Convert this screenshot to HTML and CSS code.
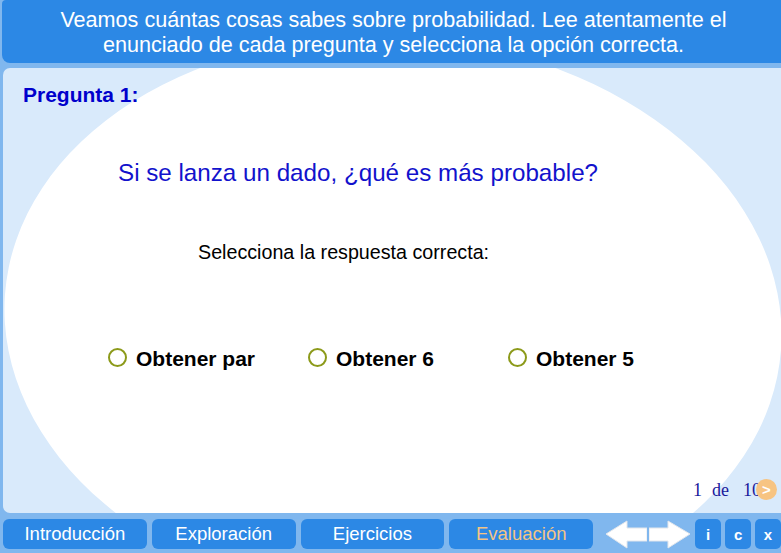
FILE: index.html
```html
<!DOCTYPE html>
<html lang="es">
<head>
<meta charset="utf-8">
<title>Probabilidad - Evaluación</title>
<link rel="stylesheet" href="styles.css">
</head>
<body>
<div class="app">
  <header class="header">
    <p>Veamos cuántas cosas sabes sobre probabilidad. Lee atentamente el<br>enunciado de cada pregunta y selecciona la opción correcta.</p>
  </header>
  <main class="panel">
    <svg class="backdrop" width="778" height="445" viewBox="0 0 778 445" aria-hidden="true">
      <ellipse cx="390" cy="254" rx="389" ry="285" transform="rotate(4 390 254)" fill="#ffffff"/>
    </svg>
    <div class="content">
      <h2 class="qnum">Pregunta 1:</h2>
      <p class="question">Si se lanza un dado, ¿qué es más probable?</p>
      <p class="prompt">Selecciona la respuesta correcta:</p>
      <div class="options">
        <label class="opt"><span class="radio"></span>Obtener par</label>
        <label class="opt"><span class="radio"></span>Obtener 6</label>
        <label class="opt"><span class="radio"></span>Obtener 5</label>
      </div>
      <div class="pager">
        <span class="pg-num">1</span><span class="pg-de">de</span><span class="pg-total">10</span><span class="next">&gt;</span>
      </div>
    </div>
  </main>
  <nav class="nav">
    <a class="tab">Introducción</a>
    <a class="tab">Exploración</a>
    <a class="tab">Ejercicios</a>
    <a class="tab tab-active">Evaluación</a>
    <div class="arrows">
      <svg class="arrow" width="41" height="30" viewBox="0 0 41 30" aria-hidden="true">
        <polygon points="0,15 21,2 21,9 41,9 41,22 21,22 21,29" fill="#ffffff" stroke="#e2e6ec" stroke-width="1"/>
      </svg>
      <svg class="arrow" width="41" height="30" viewBox="0 0 41 30" aria-hidden="true">
        <polygon points="41,15 19,2 19,9 0,9 0,22 19,22 19,29" fill="#ffffff" stroke="#e2e6ec" stroke-width="1"/>
      </svg>
    </div>
    <a class="sq sq-i">i</a>
    <a class="sq sq-c">c</a>
    <a class="sq sq-x">x</a>
  </nav>
</div>
</body>
</html>
```
FILE: styles.css
```css
html, body {
  margin: 0;
  padding: 0;
}
body {
  background: #80b7ee;
  width: 781px;
  height: 553px;
  overflow: hidden;
  font-family: "Liberation Sans", Arial, sans-serif;
}
.app {
  display: flex;
  flex-direction: column;
  width: 781px;
  height: 553px;
}
.header {
  box-sizing: border-box;
  height: 63px;
  margin-left: 2px;
  background: #2c88e5;
  border-radius: 4px 0 0 8px;
  color: #ffffff;
  text-align: center;
  padding-top: 7px;
  padding-left: 4px;
}
.header p {
  margin: 0;
  font-size: 21.6px;
  line-height: 25px;
}
.panel {
  position: relative;
  box-sizing: border-box;
  margin-top: 5px;
  margin-left: 3px;
  height: 445px;
  background: #d9eafb;
  border-radius: 7px 0 0 7px;
  overflow: hidden;
  display: flex;
}
.backdrop {
  position: absolute;
  left: 0;
  top: 0;
}
.content {
  position: relative;
  flex: 1;
  display: flex;
  flex-direction: column;
  padding-top: 16px;
}
.qnum {
  margin: 0 0 0 20px;
  font-size: 21px;
  line-height: 1;
  font-weight: bold;
  color: #0000cc;
}
.question {
  margin: 56px 0 0 115px;
  font-size: 24.2px;
  line-height: 1;
  color: #1212cc;
}
.prompt {
  margin: 58px 0 0 195px;
  font-size: 19.7px;
  line-height: 1;
  color: #000000;
}
.options {
  margin: 85px 0 0 105px;
  display: flex;
}
.opt {
  width: 200px;
  display: flex;
  align-items: center;
  font-size: 21px;
  line-height: 1;
  font-weight: bold;
  color: #000000;
}
.radio {
  box-sizing: border-box;
  width: 19px;
  height: 19px;
  border: 2px solid #8c9a1a;
  border-radius: 50%;
  background: #ffffff;
  margin-right: 9px;
  margin-top: -1px;
}
.pager {
  margin-top: auto;
  display: flex;
  justify-content: flex-end;
  align-items: center;
  padding: 0 4px 13px 0;
  font-family: "Liberation Serif", "Times New Roman", serif;
  font-size: 18px;
  line-height: 1;
  color: #1a1a9c;
}
.pg-de {
  margin-left: 10px;
}
.pg-total {
  margin-left: 14px;
}
.next {
  box-sizing: border-box;
  width: 21px;
  height: 21px;
  margin-left: -5px;
  border-radius: 50%;
  background: #f7c482;
  color: #ffffff;
  font-family: "Liberation Sans", Arial, sans-serif;
  font-weight: bold;
  font-size: 15px;
  line-height: 21px;
  text-align: center;
}
.nav {
  display: flex;
  align-items: flex-start;
  padding: 6px 0 0 3px;
  height: 40px;
  box-sizing: border-box;
}
.tab {
  width: 144px;
  height: 30px;
  margin-right: 5px;
  background: #2c88e5;
  border-radius: 6px;
  color: #ffffff;
  font-size: 18.5px;
  line-height: 30px;
  text-align: center;
}
.tab-active {
  color: #f3c486;
}
.arrows {
  display: flex;
  margin-left: 8px;
  gap: 2px;
  margin-right: 5px;
}
.arrow {
  display: block;
}
.sq {
  width: 26px;
  height: 30px;
  margin-right: 4px;
  background: #2c88e5;
  border-radius: 5px;
  color: #ffffff;
  font-weight: bold;
  font-size: 15px;
  line-height: 32px;
  text-align: center;
}
.sq-x {
  margin-right: 0;
}
```
